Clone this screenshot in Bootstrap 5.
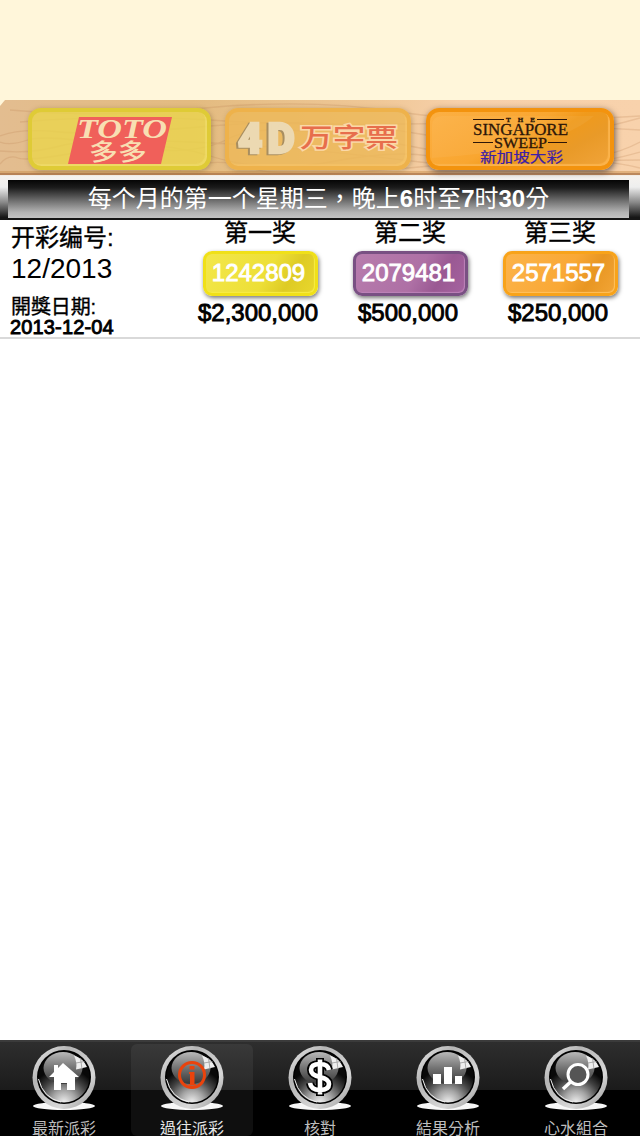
<!DOCTYPE html>
<html lang="zh-TW">

<head>
    <meta charset="utf-8">
    <meta name="viewport" content="width=device-width, initial-scale=1.0">
    <title>新加坡大彩</title>
    <link href="https://cdn.jsdelivr.net/npm/bootstrap@5.3.0/dist/css/bootstrap.min.css" rel="stylesheet">
    <style>
        body {
            height: 1136px;
            overflow: hidden;
            color: #000;
            line-height: 1;
            font-family: "Liberation Sans", "Noto Sans CJK TC", sans-serif;
        }
        .ad-space { height: 100px; background: #fff6da; }

        /* wooden shelf with the three game buttons */
        .wood { height: 76px; background: #e6bf8e; }
        .wood-grain { top: 0; left: 0; }
        .game-bar { padding: 8px 26px 0 28px; }
        .game-btn {
            height: 62px;
            border-radius: 13px;
            border: 4px solid;
        }
        .game-btn svg { display: block; margin: -4px; }
        .game-toto { width: 183px; background: rgba(234, 212, 76, .8); border-color: rgba(222, 202, 50, .9); box-shadow: 1px 1px 5px rgba(100, 80, 40, .4), inset -2px -2px 1px rgba(245, 228, 115, .5); }
        .game-4d { width: 186px; margin-left: 14px; background: rgba(237, 184, 88, .82); border-color: #eeb24b; box-shadow: 1px 1px 5px rgba(100, 80, 40, .35), inset -2px -2px 1px rgba(255, 205, 110, .4); }
        .game-4d-mark { filter: drop-shadow(-1.5px 1.5px 0 #a88e60); }
        .game-sweep { width: 188px; margin-left: 15px; background: linear-gradient(150deg, #fcb044, #f9a630 45%, #f09a1c 58%, #e99a28 75%, #f1a43a); border-color: #f3930e; box-shadow: 1px 2px 6px rgba(60, 50, 50, .75), inset -2px -2px 1px #fbb34b; }

        .draw-banner { height: 44px; padding: 4px 11px 2px 8px; background: linear-gradient(#f6f3ef 0, #eee 25%, #888 60%, #161616 94%); }
        .draw-text {
            height: 38px;
            color: #fff;
            font-size: 24px;
            background: linear-gradient(#050505, #1b1b1b 20%, #777 58%, #b4b4b4 85%, #c3c3c3);
        }
        .result-row { height: 119px; border-bottom: 2px solid #d9d9d9; }
        .draw-info { width: 185px; padding: 6px 0 0 11px; }
        .draw-title { font-size: 24px; }
        .draw-no { font-size: 28px; margin-top: 5px; }
        .draw-date-label { font-size: 20px; margin-top: 14px; letter-spacing: -.1px; }
        .draw-date { font-size: 20px; margin-left: -1px; letter-spacing: .15px; }
        .semi { -webkit-text-stroke: .35px currentColor; }
        .medium { -webkit-text-stroke: .9px currentColor; }
        .prize { width: 150px; }
        .prize-name { font-size: 24px; margin-top: 1px; }
        .prize-number {
            width: 115px;
            height: 45px;
            margin-top: 6px;
            padding: 0 3px 2px 0;
            color: #fff;
            font-size: 24px;
            border-radius: 9px;
            border: 3px solid;
        }
        .ball-yellow { background: linear-gradient(120deg, #f3e74a, #eddf37 55%, #decb24 75%, #e9d72d); border-color: #f0e018; box-shadow: 1px 2px 4px #777, inset -1px -1px 1px #f8ed45; }
        .ball-purple { background: linear-gradient(120deg, #b77cad, #ae70a5 55%, #9a5993 75%, #a563a0); border-color: #795083; box-shadow: 1px 2px 4px #777, inset -1px -1px 1px #bd83b9; }
        .ball-orange { background: linear-gradient(120deg, #fcb34a, #f9a835 55%, #e89622 75%, #f2a536); border-color: #f8a31a; box-shadow: 1px 2px 4px #777, inset -1px -1px 1px #ffc15e; }
        .prize-money { font-size: 24px; margin-top: 5px; padding-right: 4px; }

        .tab-bar {
            height: 96px;
            border-top: 2px solid #3b3b3b;
            background: linear-gradient(#2e2e2e, #1b1b1b 48px, #000 48px);
        }
        .tab-link { width: 128px; height: 94px; color: #bdbdbd; font-size: 16px; padding: 2px 3px 0; }
        .tab-link:hover { color: #fff; }
        .tab-link svg { display: block; flex-shrink: 0; }
        .tab-inner { height: 92px; width: 122px; padding-top: 1px; border-radius: 6px; }
        .tab-inner.active { background: rgba(255, 255, 255, .06); color: #e6e6e6; }
        .tab-label { margin-top: 10px; white-space: nowrap; }
    </style>
</head>

<body class="d-flex flex-column bg-white">
<div class="ad-space flex-shrink-0"></div>

<header class="wood position-relative flex-shrink-0">
    <svg class="wood-grain position-absolute" width="640" height="76">
        <defs>
            <linearGradient id="woodTone">
                <stop offset="0" stop-color="#e3bd90"/><stop offset=".3" stop-color="#e3bb80"/>
                <stop offset=".6" stop-color="#f0c898"/><stop offset=".72" stop-color="#f7d0aa"/><stop offset="1" stop-color="#f8d2ac"/>
            </linearGradient>
        </defs>
        <rect width="640" height="76" fill="url(#woodTone)"/>
        <path d="M0 0H5L0 6Z" fill="#fff6da"/>
        <path d="M0 36Q20 28 60 32T210 26T420 34T640 18M0 42Q10 46 28 40T120 46T230 38T420 48T640 42M0 64Q8 54 18 58T90 50T210 56T330 62T430 56T640 60M10 10Q100 18 205 8T400 12T640 16M0 51Q30 54 60 46T190 42T420 62T640 52M20 22Q120 14 210 20T400 24T640 30M180 70Q215 56 250 68T430 66T640 68" fill="none" stroke="#bf8658" stroke-width="1.3" opacity=".25"/>
        <rect y="71" width="640" height="2" fill="#c9904f" opacity=".5"/>
        <rect y="73" width="640" height="2" fill="#a86f42" opacity=".75"/>
        <rect y="75" width="640" height="1" fill="#f3ece5"/>
    </svg>
    <div class="game-bar d-flex position-relative">
        <div class="game-btn game-toto">
            <svg width="183" height="62">
                <path d="M51 9H144L133 56H40Z" fill="#f0605a"/>
                <text x="49" y="30" font-family="Liberation Serif, serif" font-size="28" font-weight="bold" font-style="italic" fill="#f8dfb2" textLength="90" lengthAdjust="spacingAndGlyphs">TOTO</text>
                <text x="61" y="51.500" font-family="Noto Sans CJK SC, sans-serif" font-size="23" font-weight="500" fill="#f8dfb2" textLength="58" lengthAdjust="spacingAndGlyphs">多多</text>
            </svg>
        </div>
        <div class="game-btn game-4d">
            <svg width="186" height="62">
                <text class="game-4d-mark" x="13 42.500" y="45" font-family="Roboto, sans-serif" font-size="42" font-weight="900" fill="#ecd9b2" stroke="#ecd9b2" stroke-width="2.500">4D</text>
                <text x="75" y="39" font-family="Noto Sans CJK SC, sans-serif" font-size="26" font-weight="500" fill="#e76e4c" stroke="#fbd8a8" stroke-width="3" paint-order="stroke" textLength="98" lengthAdjust="spacingAndGlyphs">万字票</text>
            </svg>
        </div>
        <div class="game-btn game-sweep">
            <svg width="188" height="62">
                <path d="M6 50Q130 42 168 8H16Q6 8 6 18Z" fill="#fff" opacity=".05"/>
                <g font-family="Liberation Serif, serif" fill="#2d1608" stroke="#2d1608" stroke-width=".3">
                    <path d="M47 11.500H78M111 11.500H141M47 34.500H67M122 34.500H141" stroke-width="1.200"/>
                    <text x="80" y="13.500" font-size="7" font-weight="bold" textLength="29">THE</text>
                    <text x="47" y="26.500" font-size="16" textLength="95" lengthAdjust="spacingAndGlyphs">SINGAPORE</text>
                    <text x="68" y="39.500" font-size="15" textLength="53" lengthAdjust="spacingAndGlyphs">SWEEP</text>
                </g>
                <text x="54" y="54" font-family="Noto Sans CJK SC, sans-serif" font-size="13.500" fill="#3c20a8" stroke="#3c20a8" stroke-width=".2" textLength="83" lengthAdjust="spacingAndGlyphs">新加坡大彩</text>
            </svg>
        </div>
    </div>
</header>

<div class="draw-banner flex-shrink-0">
    <div class="draw-text d-flex align-items-center justify-content-center"><span>每个月的第一个星期三，晚上<b>6</b>时至<b>7</b>时<b>30</b>分</span></div>
</div>

<main class="flex-grow-1">
    <div class="result-row d-flex">
        <div class="draw-info">
            <div class="draw-title semi">开彩编号:</div>
            <div class="draw-no">12/2013</div>
            <div class="draw-date-label semi">開獎日期:</div>
            <div class="draw-date medium">2013-12-04</div>
        </div>
        <div class="prize d-flex flex-column align-items-center">
            <div class="prize-name semi">第一奖</div>
            <div class="prize-number ball-yellow medium d-flex align-items-center justify-content-center">1242809</div>
            <div class="prize-money medium">$2,300,000</div>
        </div>
        <div class="prize d-flex flex-column align-items-center">
            <div class="prize-name semi">第二奖</div>
            <div class="prize-number ball-purple medium d-flex align-items-center justify-content-center">2079481</div>
            <div class="prize-money medium">$500,000</div>
        </div>
        <div class="prize d-flex flex-column align-items-center">
            <div class="prize-name semi">第三奖</div>
            <div class="prize-number ball-orange medium d-flex align-items-center justify-content-center">2571557</div>
            <div class="prize-money medium">$250,000</div>
        </div>
    </div>
</main>

<!-- glass ball shared by every tab icon -->
<svg class="position-absolute" width="0" height="0">
    <defs>
        <linearGradient id="rim" x1="0" y1="0" x2="1" y2="1">
            <stop offset="0" stop-color="#f0f0f0"/><stop offset=".3" stop-color="#b5b5b5"/><stop offset=".7" stop-color="#d8d8d8"/><stop offset="1" stop-color="#8e8e8e"/>
        </linearGradient>
        <radialGradient id="glow" cx=".5" cy="1" r=".68">
            <stop offset="0" stop-color="#f0f0f0"/><stop offset=".35" stop-color="#a5a5a5"/><stop offset=".7" stop-color="#444"/><stop offset="1" stop-color="#080808"/>
        </radialGradient>
        <linearGradient id="shine" x1="0" y1="0" x2="0" y2="1">
            <stop offset="0" stop-color="#b8b8b8"/><stop offset=".5" stop-color="#737373"/><stop offset="1" stop-color="#383838"/>
        </linearGradient>
        <symbol id="ball" viewBox="0 0 64 66">
            <ellipse cx="32" cy="61" rx="31" ry="4" fill="#f7f7f7"/>
            <circle cx="32" cy="32.500" r="31.500" fill="url(#rim)"/>
            <circle cx="32" cy="32" r="27" fill="#000"/>
            <circle cx="32" cy="32" r="25.500" fill="url(#glow)"/>
            <ellipse cx="31" cy="23" rx="19.500" ry="16" fill="url(#shine)"/>
            <path d="M6.500 34Q11 53 29 57" fill="none" stroke="#eee" stroke-width="1"/>
            <path d="M42 10.500Q51 13 55 22L44 24.500Q45.500 18 42 10.500Z" fill="#eee"/>
            <path d="M48.500 13L50 24M44 18L52.500 16.500" stroke="#999" stroke-width=".8"/>
        </symbol>
    </defs>
</svg>

<nav class="tab-bar d-flex flex-shrink-0">
    <a class="tab-link text-decoration-none d-flex justify-content-center" href="#">
        <div class="tab-inner d-flex flex-column align-items-center">
            <svg width="64" height="66">
                <use href="#ball"/>
                <path d="M17 32L22 27V20H26V23L31 18L47 32H43V45H35V38H29V45H22V32Z" fill="#fff"/>
            </svg>
            <div class="tab-label">最新派彩</div>
        </div>
    </a>
    <a class="tab-link text-decoration-none d-flex justify-content-center" href="#">
        <div class="tab-inner active d-flex flex-column align-items-center">
            <svg width="64" height="66">
                <use href="#ball"/>
                <circle cx="32" cy="30" r="12.500" fill="none" stroke="#ea430c" stroke-width="3"/>
                <path d="M29.500 21H34.500V24.500H29.500ZM29 27H34.500V39H36V40.500H28.500V39H30V29H29Z" fill="#ea430c"/>
            </svg>
            <div class="tab-label">過往派彩</div>
        </div>
    </a>
    <a class="tab-link text-decoration-none d-flex justify-content-center" href="#">
        <div class="tab-inner d-flex flex-column align-items-center">
            <svg width="64" height="66">
                <use href="#ball"/>
                <g fill="none" stroke-linecap="butt">
                    <path d="M32 13V51M41 25Q40 19 32 19Q23 19 23 25Q23 30 32 32Q41 34 41 39Q41 45 32 45Q23 45 22 38" stroke="#000" stroke-width="8"/>
                    <path d="M32 14.500V49.500M41 25Q40 19 32 19Q23 19 23 25Q23 30 32 32Q41 34 41 39Q41 45 32 45Q23 45 22 38" stroke="#fff" stroke-width="4.600"/>
                </g>
            </svg>
            <div class="tab-label">核對</div>
        </div>
    </a>
    <a class="tab-link text-decoration-none d-flex justify-content-center" href="#">
        <div class="tab-inner d-flex flex-column align-items-center">
            <svg width="64" height="66">
                <use href="#ball"/>
                <path d="M17 29H25V39H17ZM28 22H36V39H28ZM39 31H46V39H39Z" fill="#fff"/>
            </svg>
            <div class="tab-label">結果分析</div>
        </div>
    </a>
    <a class="tab-link text-decoration-none d-flex justify-content-center" href="#">
        <div class="tab-inner d-flex flex-column align-items-center">
            <svg width="64" height="66">
                <use href="#ball"/>
                <circle cx="34" cy="29.500" r="10" fill="#555" stroke="#fff" stroke-width="3"/>
                <path d="M27 36.500L19 44" stroke="#fff" stroke-width="3.500"/>
            </svg>
            <div class="tab-label">心水組合</div>
        </div>
    </a>
</nav>

<script src="https://cdn.jsdelivr.net/npm/bootstrap@5.3.0/dist/js/bootstrap.bundle.min.js"></script>
</body>

</html>
